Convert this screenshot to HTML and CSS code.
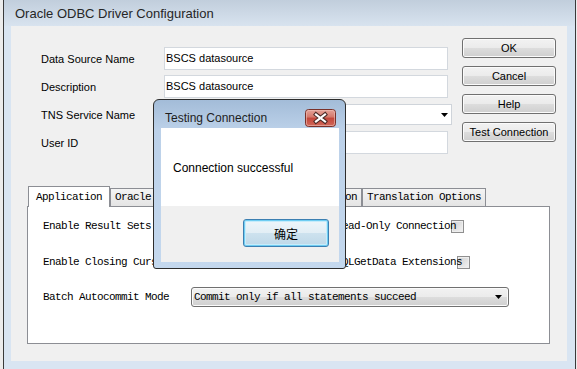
FILE: index.html
```html
<!DOCTYPE html>
<html lang="en">
<head>
    <meta charset="UTF-8">
    <meta name="viewport" content="width=device-width, initial-scale=1.0">
    <title>Oracle ODBC Driver Configuration</title>
    <link rel="stylesheet" href="styles.css">
</head>
<body>
    <div class="window">
        <div class="titlebar">Oracle ODBC Driver Configuration</div>
        <div class="client">
            <div class="top">
                <div class="fields">
                    <label>Data Source Name</label>
                    <div class="textbox">BSCS datasource</div>
                    <label>Description</label>
                    <div class="textbox">BSCS datasource</div>
                    <label>TNS Service Name</label>
                    <div class="combo">
                        <svg width="7" height="4" viewBox="0 0 7 4"><path d="M0 0H7L3.5 4Z" fill="#000"/></svg>
                    </div>
                    <label>User ID</label>
                    <div class="textbox"></div>
                </div>
                <div class="buttons">
                    <button class="btn">OK</button>
                    <button class="btn">Cancel</button>
                    <button class="btn">Help</button>
                    <button class="btn">Test Connection</button>
                </div>
            </div>

            <div class="tabs">
                <div class="tab active">Application</div>
                <div class="tab">Oracle</div>
                <div class="tab">Workarounds</div>
                <div class="tab">SQL Server Migration</div>
                <div class="tab">Translation Options</div>
            </div>
            <div class="panel">
                <div class="opt-row row-a">
                    <span>Enable Result Sets</span><span class="check left"></span>
                    <div class="right"><span class="opt-label">Read-Only Connection</span><span class="check"></span></div>
                </div>
                <div class="opt-row row-b">
                    <span>Enable Closing Cursors</span><span class="check left"></span>
                    <div class="right"><span class="opt-label">Enable SQLGetData Extensions</span><span class="check"></span></div>
                </div>
                <div class="batch">
                    <span class="batch-label">Batch Autocommit Mode</span>
                    <div class="select">
                        <span>Commit only if all statements succeed</span>
                        <svg width="7" height="4" viewBox="0 0 7 4"><path d="M0 0H7L3.5 4Z" fill="#000"/></svg>
                    </div>
                </div>
            </div>
        </div>
    </div>

    <!-- message box on top of the config window -->
    <div class="msgbox">
        <div class="msg-title">
            <span class="msg-title-text">Testing Connection</span>
            <svg class="close" width="31" height="18" viewBox="0 0 31 18">
                <defs>
                    <linearGradient id="closeGrad" x1="0" y1="0" x2="0" y2="1">
                        <stop offset="0" stop-color="#e6a59b"/>
                        <stop offset="0.45" stop-color="#d4776a"/>
                        <stop offset="0.5" stop-color="#c2463a"/>
                        <stop offset="1" stop-color="#d26a5c"/>
                    </linearGradient>
                </defs>
                <rect x="0.5" y="0.5" width="30" height="17" rx="3" fill="url(#closeGrad)" stroke="#7a3129"/>
                <rect x="1.5" y="1.5" width="28" height="15" rx="2" fill="none" stroke="#efc0b8" stroke-opacity="0.6"/>
                <path d="M11 5.5L20 12.5M20 5.5L11 12.5" stroke="#4b2b27" stroke-width="4.2" stroke-linecap="square"/>
                <path d="M11 5.5L20 12.5M20 5.5L11 12.5" stroke="#fff" stroke-width="2.2" stroke-linecap="square"/>
            </svg>
        </div>
        <div class="msg-body">
            <div class="msg-text">Connection successful</div>
            <div class="msg-foot">
                <button class="btn-default">确定</button>
            </div>
        </div>
    </div>
</body>
</html>
```

FILE: styles.css
```css
body {
    margin: 0;
    width: 577px;
    height: 369px;
    overflow: hidden;
    background-color: #ececec;
    font-family: "Liberation Sans", Arial, sans-serif;
    font-size: 11px;
    color: #000;
}
.window {
    margin-left: 3px;
    width: 573px;
    height: 369px;
    box-sizing: border-box;
    border-left: 1px solid #3a3a3a;
    border-right: 1px solid #3a3a3a;
    background-color: #d9e5f2;
    display: flex;
    flex-direction: column;
}
.titlebar {
    height: 26px;
    flex: none;
    box-sizing: border-box;
    padding: 1px 0 0 11px;
    line-height: 26px;
    font-size: 13px;
    color: #262626;
    background: linear-gradient(#c1cedc, #d8e3ef);
}
.client {
    margin: 0 8px 0 7px;
    height: 335px;
    background-color: #f0f0f0;
}
.top {
    display: flex;
    padding-top: 12px;
}
.fields {
    width: 441px;
    box-sizing: border-box;
    padding: 9px 0 0 30px;
    display: grid;
    grid-template-columns: 123px 288px;
    grid-auto-rows: 23px;
    row-gap: 5px;
    align-items: center;
}
.textbox {
    width: 284px;
    height: 23px;
    box-sizing: border-box;
    border: 1px solid #d3d8de;
    background-color: #fff;
    padding-left: 1px;
    line-height: 21px;
}
.combo {
    height: 21px;
    box-sizing: border-box;
    border: 1px solid #cfd4da;
    background-color: #fff;
    display: flex;
    align-items: center;
    justify-content: flex-end;
    padding-right: 3px;
}
.buttons {
    margin-left: 10px;
    display: flex;
    flex-direction: column;
    gap: 8px;
}
.btn {
    width: 94px;
    height: 20px;
    box-sizing: border-box;
    padding: 0;
    border: 1px solid #707070;
    border-radius: 3px;
    background: linear-gradient(#f2f2f2, #ebebeb 49%, #dddddd 50%, #cfcfcf);
    box-shadow: inset 0 0 0 1px #fbfbfb;
    font-family: "Liberation Sans", Arial, sans-serif;
    font-size: 11px;
    color: #000;
    line-height: 18px;
}
.tabs {
    display: flex;
    align-items: flex-end;
    margin: 32px 0 0 17px;
    height: 20px;
    font-family: "Liberation Mono", "Courier New", monospace;
    font-size: 11px;
    letter-spacing: -0.6px;
}
.tab {
    height: 18px;
    box-sizing: border-box;
    border: 1px solid #8c8e94;
    border-bottom: none;
    background: linear-gradient(#f4f4f4, #e4e4e4);
    padding: 0 4px;
    line-height: 17px;
    white-space: nowrap;
}
.tab.active {
    height: 21px;
    margin-bottom: -1px;
    padding: 0 7px;
    line-height: 20px;
    background: #fff;
    position: relative;
    z-index: 1;
}
.panel {
    margin-left: 16px;
    width: 523px;
    height: 138px;
    box-sizing: border-box;
    border: 1px solid #8c8e94;
    background-color: #fff;
    padding: 11px 0 0 15px;
    font-family: "Liberation Mono", "Courier New", monospace;
    font-size: 11px;
    letter-spacing: -0.6px;
}
.opt-row {
    display: flex;
    align-items: center;
    height: 16px;
    white-space: nowrap;
}
.opt-row .right {
    margin-left: auto;
    display: flex;
    align-items: center;
}
/* label text is drawn over the edge of its checkbox */
.opt-label {
    position: relative;
    z-index: 1;
}
.row-a {
    padding-right: 85px;
}
.row-b {
    margin-top: 20px;
    padding-right: 79px;
}
.check {
    width: 13px;
    height: 13px;
    flex: none;
    box-sizing: border-box;
    margin-left: -5px;
    border: 1px solid #8f8f8f;
    background: linear-gradient(135deg, #cfcfcf, #f3f3f3);
    box-shadow: inset 0 0 0 1px #eeeeee;
}
.check.left {
    margin-left: 8px;
}
.batch {
    display: flex;
    align-items: center;
    margin-top: 17px;
    white-space: nowrap;
}
.batch-label {
    width: 148px;
}
.select {
    width: 318px;
    height: 20px;
    box-sizing: border-box;
    border: 1px solid #707070;
    border-radius: 3px;
    background: linear-gradient(#f2f2f2, #ebebeb 49%, #dddddd 50%, #cfcfcf);
    box-shadow: inset 0 0 0 1px #fbfbfb;
    display: flex;
    align-items: center;
    justify-content: space-between;
    padding: 0 6px 0 2px;
}
.msgbox {
    position: absolute;
    left: 153px;
    top: 99px;
    width: 193px;
    height: 170px;
    box-sizing: border-box;
    border: 1px solid #2d2d2d;
    border-radius: 6px 6px 3px 3px;
    background: linear-gradient(#a3bcd8, #bcd1e9 30px, #c4d8ee);
    padding: 0 6px 6px 7px;
    display: flex;
    flex-direction: column;
    z-index: 2;
}
.msg-title {
    height: 28px;
    flex: none;
    display: flex;
    justify-content: space-between;
    align-items: flex-start;
    padding-left: 4px;
}
.msg-title-text {
    margin-top: 10px;
    font-size: 12px;
    line-height: 16px;
    color: #1e1e1e;
}
.close {
    margin: 9px 3px 0 0;
}
.msg-body {
    height: 134px;
    display: flex;
    flex-direction: column;
}
.msg-text {
    height: 78px;
    box-sizing: border-box;
    background-color: #fff;
    padding: 32px 0 0 12px;
    font-size: 12px;
    line-height: 16px;
}
.msg-foot {
    flex: 1;
    background-color: #f0f0f0;
    display: flex;
    justify-content: flex-end;
    padding: 13px 10px 0 0;
}
.btn-default {
    width: 86px;
    height: 28px;
    box-sizing: border-box;
    padding: 0;
    border: 1px solid #3c7fb1;
    border-radius: 3px;
    background: linear-gradient(#eef6fa, #e2eef5 49%, #cde2ee 50%, #bed8e8);
    box-shadow: inset 0 0 0 1px #6fcdf2, inset 0 0 0 2px #c6ecfb;
    font-family: "Noto Sans CJK SC", sans-serif;
    font-size: 12px;
    color: #000;
}
```
